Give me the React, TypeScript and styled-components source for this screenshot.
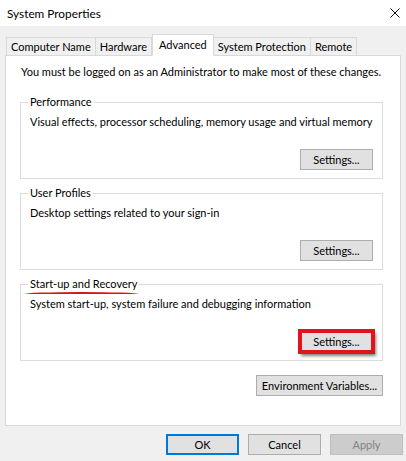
import React from 'react';
import styled, { createGlobalStyle } from 'styled-components';

const GlobalStyle = createGlobalStyle`
    html, body {
        margin: 0;
        padding: 0;
        background: #f0f0f0;
    }
    * {
        box-sizing: border-box;
    }
`;

const Window = styled.div`
    display: flex;
    flex-direction: column;
    width: 406px;
    height: 461px;
    background: #f0f0f0;
    color: #000;
    font-family: Lato, 'Liberation Sans', Arial, sans-serif;
    font-size: 11px;
    overflow: hidden;
`;

const TitleBar = styled.div`
    display: flex;
    align-items: center;
    justify-content: space-between;
    height: 26px;
    padding: 0 4px 0 7px;
    background: #fff;
    font-size: 11.8px;
`;

const CloseButton = styled.div`
    display: flex;
    align-items: center;
    justify-content: center;
    width: 14px;
    height: 14px;
    margin-top: -1px;
`;

const Body = styled.div`
    display: flex;
    flex-direction: column;
    padding: 9px 5px 0 5px;
`;

const TabStrip = styled.div`
    display: flex;
    align-items: flex-end;
    height: 21px;
    padding-left: 1px;
    margin-bottom: -1px;
    position: relative;
    z-index: 1;
`;

const Tab = styled.div<{ active?: boolean }>`
    display: flex;
    align-items: center;
    height: ${(p) => (p.active ? '22px' : '19px')};
    padding: ${(p) => (p.active ? '0 6px 2px' : '0 4px')};
    border: 1px solid #d9d9d9;
    border-left: ${(p) => (p.active ? '1px solid #d9d9d9' : 'none')};
    border-bottom: ${(p) => (p.active ? '1px solid #fff' : '1px solid #d9d9d9')};
    background: ${(p) => (p.active ? '#fff' : '#f0f0f0')};
    white-space: nowrap;

    &:first-child {
        border-left: 1px solid #d9d9d9;
    }
`;

const Panel = styled.div`
    display: flex;
    flex-direction: column;
    width: 396px;
    height: 371px;
    padding: 8px 17px 0 14px;
    border: 1px solid #d9d9d9;
    background: #fff;
`;

const Notice = styled.div`
    line-height: 16px;
    padding-left: 1px;
    margin-bottom: 14px;
    white-space: nowrap;
`;

const Group = styled.fieldset`
    display: flex;
    flex-direction: column;
    margin: 0 0 6px 0;
    padding: 0 9px 8px 9px;
    min-inline-size: 0;
    border: 1px solid #dcdcdc;
`;

const Legend = styled.legend<{ marked?: boolean }>`
    position: relative;
    padding: 0 2px;
    margin-left: -2px;
    line-height: 16px;

    &::after {
        content: '';
        display: ${(p) => (p.marked ? 'block' : 'none')};
        position: absolute;
        left: -3px;
        right: 1px;
        bottom: -2px;
        height: 2px;
        border-radius: 50% 50% 40% 40% / 100% 100% 0 0;
        background: #d9151b;
    }
`;

const Description = styled.div`
    line-height: 16px;
    margin-top: 4px;
    white-space: nowrap;
`;

const ButtonRow = styled.div`
    display: flex;
    justify-content: flex-end;
    margin-top: 19px;
`;

const Button = styled.button<{ primary?: boolean; marked?: boolean; wide?: boolean }>`
    height: 21px;
    width: ${(p) => (p.wide ? '127px' : '73px')};
    padding: 0;
    font-family: inherit;
    font-size: 11px;
    color: #000;
    background: #e1e1e1;
    border: 1px solid #adadad;
    border-color: ${(p) => (p.marked ? '#e3131b' : p.primary ? '#0078d7' : '#adadad')};
    box-shadow: ${(p) =>
        p.primary
            ? 'inset 0 0 0 1px #0078d7'
            : p.marked
            ? '0 0 0 2px #e3131b, inset 0 0 0 1px #e3131b, 2px 3px 3px 1px rgba(0, 0, 0, 0.5)'
            : 'none'};

    &:disabled {
        color: #838383;
        background: #cccccc;
        border-color: #bfbfbf;
    }
`;

const EnvRow = styled.div`
    display: flex;
    justify-content: flex-end;
    margin-top: 8px;
`;

const Footer = styled.div`
    display: flex;
    justify-content: flex-end;
    gap: 9px;
    padding: 8px 0 0 0;
    margin-right: -2px;
`;

const groups = [
    {
        title: 'Performance',
        text: 'Visual effects, processor scheduling, memory usage and virtual memory',
    },
    {
        title: 'User Profiles',
        text: 'Desktop settings related to your sign-in',
    },
    {
        title: 'Start-up and Recovery',
        text: 'System start-up, system failure and debugging information',
        marked: true,
    },
];

const tabs = ['Computer Name', 'Hardware', 'Advanced', 'System Protection', 'Remote'];

const App: React.FC = () => {
    return (
        <>
            <GlobalStyle />
            <Window>
                <TitleBar>
                    <span>System Properties</span>
                    <CloseButton>
                        <svg width="10" height="10" viewBox="0 0 10 10">
                            <path d="M0.5 0.5 L9.5 9.5 M9.5 0.5 L0.5 9.5" stroke="#111" strokeWidth="1" fill="none" />
                        </svg>
                    </CloseButton>
                </TitleBar>
                <Body>
                    <TabStrip>
                        {tabs.map((t) => (
                            <Tab key={t} active={t === 'Advanced'}>
                                {t}
                            </Tab>
                        ))}
                    </TabStrip>
                    <Panel>
                        <Notice>You must be logged on as an Administrator to make most of these changes.</Notice>
                        {groups.map((g) => (
                            <Group key={g.title}>
                                <Legend marked={g.marked}>{g.title}</Legend>
                                <Description>{g.text}</Description>
                                <ButtonRow>
                                    <Button marked={g.marked}>Settings...</Button>
                                </ButtonRow>
                            </Group>
                        ))}
                        <EnvRow>
                            <Button wide>Environment Variables...</Button>
                        </EnvRow>
                    </Panel>
                    <Footer>
                        <Button primary>OK</Button>
                        <Button>Cancel</Button>
                        <Button disabled>Apply</Button>
                    </Footer>
                </Body>
            </Window>
        </>
    );
};

export default App;
